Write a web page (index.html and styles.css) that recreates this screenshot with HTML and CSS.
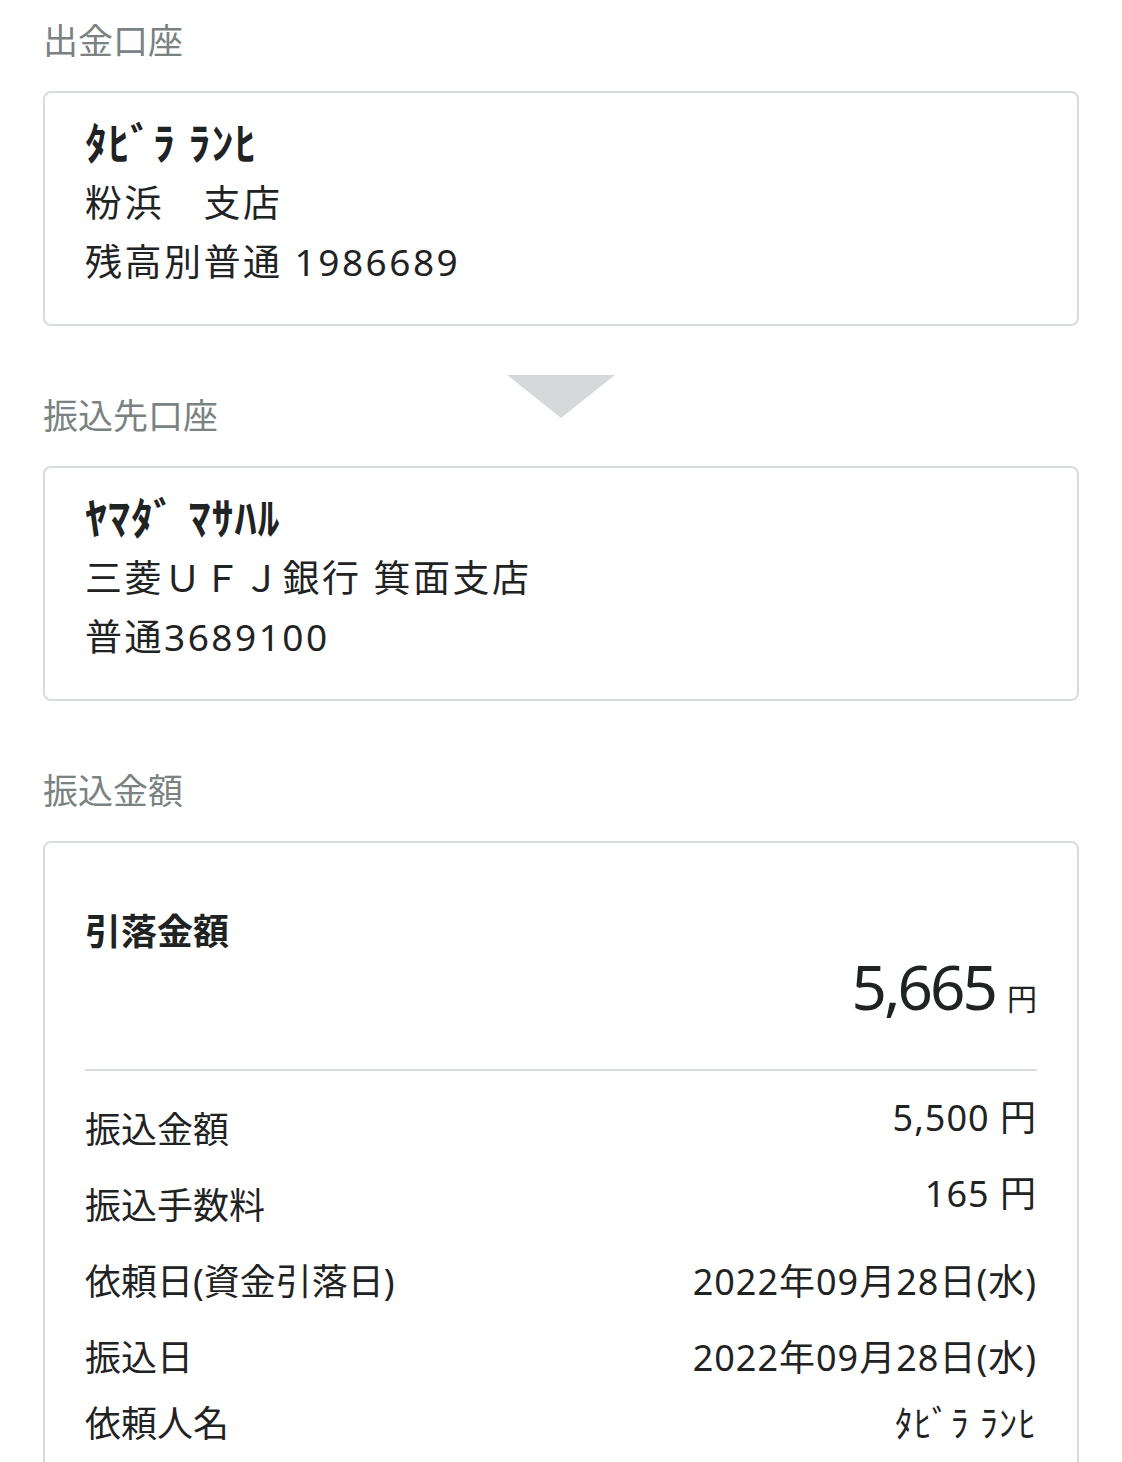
FILE: index.html
```html
<!DOCTYPE html>
<html lang="ja">
<head>
  <meta charset="UTF-8" />
  <meta name="viewport" content="width=device-width, initial-scale=1.0" />
  <title>振込内容確認</title>
  <link rel="stylesheet" href="styles.css">
</head>
<body>
  <div class="page">
    <section class="block">
      <h2 class="block-title">出金口座</h2>
      <div class="card account">
        <p class="kana-name">ﾀﾋﾞﾗ ﾗﾝﾋ</p>
        <p>粉浜　支店</p>
        <p>残高別普通 1986689</p>
      </div>
    </section>

    <section class="block">
      <h2 class="block-title">振込先口座<span class="arrow"></span></h2>
      <div class="card account">
        <p class="kana-name">ﾔﾏﾀﾞ ﾏｻﾊﾙ</p>
        <p>三菱ＵＦＪ銀行 箕面支店</p>
        <p>普通3689100</p>
      </div>
    </section>

    <!-- 金額 -->
    <section class="block">
      <h2 class="block-title">振込金額</h2>
      <div class="card amount-card">
        <p class="total-label">引落金額</p>
        <p class="total">5,665<span class="total-yen">円</span></p>
        <hr class="divider" />
        <dl class="details">
          <div class="row"><dt>振込金額</dt><dd class="raised">5,500 円</dd></div>
          <div class="row"><dt>振込手数料</dt><dd class="raised">165 円</dd></div>
          <div class="row"><dt>依頼日(資金引落日)</dt><dd>2022年09月28日(水)</dd></div>
          <div class="row"><dt>振込日</dt><dd>2022年09月28日(水)</dd></div>
          <div class="row last"><dt>依頼人名</dt><dd>ﾀﾋﾞﾗ ﾗﾝﾋ</dd></div>
        </dl>
      </div>
    </section>
  </div>
</body>
</html>
```

FILE: styles.css
```css
body {
  margin: 0;
  background-color: #fff;
  font-family: "Noto Sans", "Noto Sans CJK JP", sans-serif;
  color: #1f2323;
}
.page {
  padding: 16px 43px 0;
}
.block + .block {
  margin-top: 65px;
}
.block-title {
  position: relative;
  margin: 0 0 25px;
  font-size: 35px;
  font-weight: normal;
  line-height: 50px;
  color: #7a8282;
}
.arrow {
  position: absolute;
  left: 50%;
  top: -16px;
  margin-left: -54px;
  width: 0;
  height: 0;
  border-left: 54px solid transparent;
  border-right: 54px solid transparent;
  border-top: 43px solid #d5d9d9;
}
.card {
  border: 2px solid #d8dcdc;
  border-radius: 8px;
}
.account {
  padding: 21px 40px 33px;
}
.account p {
  margin: 0;
  font-size: 37px;
  line-height: 59px;
  letter-spacing: 2.5px;
}
.account .kana-name {
  font-size: 44px;
  font-weight: bold;
  letter-spacing: 1px;
}
/* 金額カード */
.amount-card {
  padding: 61px 40px 60px;
}
.total-label {
  margin: 0;
  font-size: 36px;
  font-weight: bold;
  line-height: 56px;
}
.total {
  margin: -5px 0 0;
  text-align: right;
  font-size: 62px;
  line-height: 62px;
  letter-spacing: -3px;
}
.total-yen {
  font-size: 30px;
  line-height: 1;
  letter-spacing: 0;
  margin-left: 12px;
}
.divider {
  margin: 52px 0 0;
  border: 0;
  height: 2px;
  background-color: #d8dcdc;
}
.details {
  margin: 21px 0 0;
}
.row {
  display: flex;
  justify-content: space-between;
  align-items: center;
  height: 76px;
}
.row.last {
  height: 56px;
}
.row dt {
  font-size: 36px;
  line-height: 50px;
}
.row dd {
  margin: 0;
  font-size: 36px;
  line-height: 50px;
  letter-spacing: 1px;
}
.row dd.raised {
  margin-bottom: 25px;
}
```
